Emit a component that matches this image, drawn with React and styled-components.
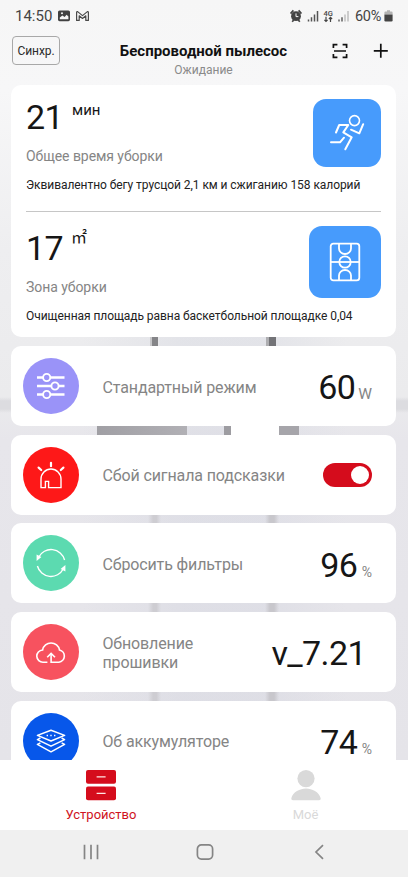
import React from "react";
import styled, { createGlobalStyle } from "styled-components";

const metrics = [
  {
    value: "21",
    unit: "мин",
    label: "Общее время уборки",
    note: "Эквивалентно бегу трусцой 2,1 км и сжиганию 158 калорий",
    size: 68,
    icon: <RunIcon />,
  },
  {
    value: "17",
    unit: "㎡",
    raised: true,
    label: "Зона уборки",
    note: "Очищенная площадь равна баскетбольной площадке 0,04",
    size: 72,
    icon: <CourtIcon />,
  },
];

const rows = [
  { label: "Стандартный режим", color: "#9a93f8", icon: <SlidersIcon />, value: "60", unit: "W", unitSize: 15.5, unitGap: 3 },
  { label: "Сбой сигнала подсказки", color: "#fe1818", icon: <AlarmIcon />, toggle: true },
  { label: "Сбросить фильтры", color: "#5cdab0", icon: <RefreshIcon />, value: "96", unit: "%", unitSize: 14, unitGap: 4.5 },
  { label: "Обновление прошивки", color: "#f7525f", icon: <CloudIcon />, value: "v_7.21", wide: true },
  { label: "Об аккумуляторе", color: "#0757ea", icon: <LayersIcon />, value: "74", unit: "%", unitSize: 14, unitGap: 4.5 },
];

function App() {
  return (
    <Screen>
      <GlobalStyle />
      <StatusBar>
        <StatusGroup>
          <Clock>14:50</Clock>
          <StatusLeftIcons />
        </StatusGroup>
        <StatusGroup>
          <StatusRightIcons />
          <Percent>60%</Percent>
          <BatteryIcon />
        </StatusGroup>
      </StatusBar>

      <Header>
        <SyncButton>Синхр.</SyncButton>
        <Titles>
          <Title>Беспроводной пылесос</Title>
          <Subtitle>Ожидание</Subtitle>
        </Titles>
        <Actions>
          <ScanIcon />
          <PlusIcon />
        </Actions>
      </Header>

      <Content>
        <SummaryCard>
          {metrics.map((m) => (
            <Metric key={m.label}>
              <MetricTop>
                <div>
                  <MetricValue>
                    {m.value}
                    <MetricUnit $raised={m.raised}>{m.unit}</MetricUnit>
                  </MetricValue>
                  <MetricLabel>{m.label}</MetricLabel>
                </div>
                <Tile $size={m.size}>{m.icon}</Tile>
              </MetricTop>
              <Note>{m.note}</Note>
            </Metric>
          ))}
        </SummaryCard>

        {rows.map((row) => (
          <RowCard key={row.label}>
            <Circle $color={row.color}>{row.icon}</Circle>
            <RowLabel $narrow={row.wide}>{row.label}</RowLabel>
            {row.toggle ? (
              <Toggle>
                <Knob />
              </Toggle>
            ) : (
              <RowValue $wide={row.wide}>
                {row.value}
                {row.unit && (
                  <RowUnit $size={row.unitSize} $gap={row.unitGap}>
                    {row.unit}
                  </RowUnit>
                )}
              </RowValue>
            )}
          </RowCard>
        ))}
      </Content>

      <TabBar>
        <Tab $active>
          <DeviceIcon />
          <span>Устройство</span>
        </Tab>
        <Tab>
          <PersonIcon />
          <span>Моё</span>
        </Tab>
      </TabBar>

      <NavBar>
        <svg width="16" height="16" viewBox="0 0 16 16" fill="none" stroke="#858585" strokeWidth="1.7">
          <path d="M1.5 .7v14.6M8 .7v14.6M14.5 .7v14.6" />
        </svg>
        <svg width="18" height="16" viewBox="0 0 18 16" fill="none" stroke="#858585" strokeWidth="1.7">
          <rect x="1.4" y=".9" width="15.2" height="14.2" rx="4" />
        </svg>
        <svg width="16" height="16" viewBox="0 0 16 16" fill="none" stroke="#858585" strokeWidth="1.7">
          <path d="M12 1.2L5 8l7 6.8" />
        </svg>
      </NavBar>
    </Screen>
  );
}

/* icons */

function StatusLeftIcons() {
  return (
    <svg width="32" height="14" viewBox="0 0 32 14">
      <rect x="0" y="1.4" width="12" height="10.8" rx="1.6" fill="#414141" />
      <path d="M1.8 10.2V8.4l2.6-2L6.6 8l2-2.2 1.8 1.8v2.6z" fill="#f5f5f5" />
      <circle cx="4" cy="4.2" r="1" fill="#f5f5f5" />
      <path
        d="M18.6 11.4v-8q0-1 1-.8l4.9 4 4.9-4q1-.2 1 .8v8h-2.6V6.8l-3.3 2.7-3.3-2.7v4.6z"
        fill="none"
        stroke="#4a4a4a"
        strokeWidth="1.2"
        strokeLinejoin="round"
      />
    </svg>
  );
}

function StatusRightIcons() {
  return (
    <svg width="60" height="14" viewBox="0 0 60 14">
      <circle cx="7" cy="7.2" r="4.9" fill="#444" />
      <path d="M1.6 4.6l2.8-3.2M12.4 4.6L9.6 1.4M3.2 12.8L4.700 11M10.800 12.800L9.300 11" stroke="#444" strokeWidth="1.7" />
      <path d="M7 4.4v3.2h2.4" fill="none" stroke="#f7f7f7" strokeWidth="1" />
      <path d="M19.500 12.4v-2M22.500 12.4V8.2M25.500 12.4v-7M28.500 12.4V2" stroke="#555" strokeWidth="1.5" />
      <text x="34.500" y="6.6" fontSize="7.5" fontWeight="500" fill="#444">4G</text>
      <path d="M37 7.8v4.6M35.4 10.800l1.600 1.600 1.600-1.600M41.500 13V8.4M39.900 10l1.600-1.600 1.600 1.600" fill="none" stroke="#444" strokeWidth="1.2" />
      <path d="M50 12.4v-2M53 12.4V8.2" stroke="#555" strokeWidth="1.4" />
      <path d="M56 12.4v-7M59 12.4V2" stroke="#bbb" strokeWidth="1.4" />
    </svg>
  );
}

function BatteryIcon() {
  return (
    <svg width="9" height="14" viewBox="0 0 9 14">
      <path d="M3 1.2h3v1.2h1.4q1.2 0 1.2 1.2v1.8H.4V3.6q0-1.2 1.2-1.2H3z" fill="#b3b3b3" />
      <path d="M.4 5.4h8.2v5.8q0 1.2-1.2 1.2H1.6q-1.2 0-1.2-1.2z" fill="#444" />
    </svg>
  );
}

function ScanIcon() {
  return (
    <svg width="16" height="16" viewBox="0 0 16 16" fill="none" stroke="#111" strokeWidth="1.7">
      <path d="M1.4 5V1.6h4M10.6 1.6h4V5M14.6 11v3.4h-4M5.4 14.4h-4V11M2 8h12" />
    </svg>
  );
}

function PlusIcon() {
  return (
    <svg width="16" height="16" viewBox="0 0 16 16" fill="none" stroke="#111" strokeWidth="1.7">
      <path d="M7.8 .8v14M.8 7.8h14" />
    </svg>
  );
}

function RunIcon() {
  return (
    <svg width="36" height="38" viewBox="0 0 36 38" fill="none" stroke="#fff" strokeWidth="2" strokeLinejoin="round" strokeLinecap="round">
      <circle cx="25.5" cy="6.6" r="5" strokeWidth="1.6" />
      <path d="M7 18.5l3.2-7.5h9.1l-5 7.4 8.4 4.9-6.4 12" />
      <path d="M2 28.3h9l4-4.6" />
      <path d="M34.2 10.2l-3.9 9.1-8.3-3.6" />
    </svg>
  );
}

function CourtIcon() {
  return (
    <svg width="32" height="40" viewBox="0 0 32 40" fill="none" stroke="#fff" strokeWidth="1.8">
      <rect x="1.7" y="1.7" width="28.6" height="36.6" rx="2.6" />
      <path d="M1.7 20h28.6" />
      <circle cx="16" cy="20" r="5.7" />
      <path d="M10 2v4.4a6 5.6 0 0 0 12 0V2M10 38v-4.4a6 5.6 0 0 1 12 0V38" />
    </svg>
  );
}

function SlidersIcon() {
  return (
    <svg width="30" height="28" viewBox="0 0 30 28" fill="none" stroke="#fff" strokeWidth="2.4">
      <path d="M1 5.5h6.2M14 5.5h14.5M1 14h14.5M22.5 14h6M1 22.5h6.2M14 22.5h14.5" />
      <circle cx="10.7" cy="5.5" r="3.6" strokeWidth="1.9" />
      <circle cx="19" cy="14" r="3.6" strokeWidth="1.9" />
      <circle cx="10.7" cy="22.5" r="3.6" strokeWidth="1.9" />
    </svg>
  );
}

function AlarmIcon() {
  return (
    <svg width="30" height="28" viewBox="0 0 30 28" fill="none" stroke="#fff" strokeWidth="1.4">
      <path d="M5 26.6V18a10 10 0 0 1 20 0v8.6H12.600v-6.200H9.400v6.200z" />
      <path d="M15 1.8v3.4M2.6 6.6L5.200 9M27.4 6.6L24.8 9" strokeWidth="2.2" strokeLinecap="round" />
    </svg>
  );
}

function RefreshIcon() {
  return (
    <svg width="30" height="30" viewBox="0 0 30 30" fill="none" stroke="#fff" strokeWidth="1.4">
      <path d="M28.6 12A14 14 0 0 0 2.6 9.2M1.4 18A14 14 0 0 0 27.4 20.8" />
      <path d="M.6 6.4V13l4.800-4zM29.400 23.600V17l-4.800 4z" fill="#fff" stroke="none" />
    </svg>
  );
}

function CloudIcon() {
  return (
    <svg width="30" height="24" viewBox="0 0 30 24" fill="none" stroke="#fff" strokeWidth="1.6">
      <path d="M11.4 22.2H7.2a6 6 0 0 1-.6-12.2 8.6 8.6 0 0 1 16.9 0 6.2 6.2 0 0 1-.6 12.2h-7.8v-8.6" />
      <path d="M11.2 17.2l3.900-3.800 3.900 3.800" />
    </svg>
  );
}

function LayersIcon() {
  return (
    <svg width="30" height="24" viewBox="0 0 30 24" fill="none" stroke="#fff" strokeWidth="1.5" strokeLinejoin="round">
      <path d="M15 1.2l13.6 5.2L15 12 1.4 6.4z" />
      <path d="M4.4 9l-3 1.6L15 17.2l13.6-6.6-3-1.6" />
      <path d="M4.4 13.8l-3 1.6L15 22.8l13.6-7.4-3-1.6" />
      <path d="M10.6 6.5H12M14.3 6.5h1.400M18 6.5h1.400" strokeWidth="1.6" />
    </svg>
  );
}

function DeviceIcon() {
  return (
    <svg width="30" height="31" viewBox="0 0 30 31">
      <rect x="0" y="0" width="30" height="13.8" rx="2" fill="#d50c1c" />
      <rect x="0" y="16.4" width="30" height="13.8" rx="2" fill="#d50c1c" />
      <path d="M10.6 6.9h9M10.6 23.3h9" stroke="#ffe6e6" strokeWidth="1.3" />
    </svg>
  );
}

function PersonIcon() {
  return (
    <svg width="30" height="31" viewBox="0 0 30 31" fill="#d9d9d9">
      <circle cx="15" cy="8.6" r="8.6" />
      <path d="M.3 28.3C2 22 9 18.6 15 18.6s13 3.4 14.7 9.7q.3 1.9-1.7 1.9H2q-2 0-1.7-1.9z" />
    </svg>
  );
}

/* styles */

const GlobalStyle = createGlobalStyle`
  * {
    box-sizing: border-box;
  }

  body {
    margin: 0;
    font-family: Roboto, "Noto Sans CJK SC", sans-serif;
  }

  svg {
    display: block;
    flex-shrink: 0;
  }
`;

/* the gradients draw the blurred room that shows between the cards */
const Screen = styled.div`
  display: flex;
  flex-direction: column;
  height: 877px;
  overflow: hidden;
  background:
    linear-gradient(90deg, #a09fa4, #b1b0b5) 97px 426px / 90px 9px no-repeat,
    linear-gradient(90deg, #9d9ca1 0 7px, #fff 7px 55px, #a6a5aa 55px) 224px 426px / 75px 9px no-repeat,
    linear-gradient(90deg, #c6c6c8 0 2px, #858588 2px 8px, #e8e8ea 8px) 150px 330px / 9px 20px no-repeat,
    linear-gradient(90deg, #aeaeb1 0 3px, #737377 3px) 266px 330px / 10px 20px no-repeat,
    linear-gradient(90deg, transparent, #cecdd2 40% 65%, transparent) 148px 510px / 13px 260px no-repeat,
    linear-gradient(90deg, transparent, #c8c7cc 35% 65%, transparent) 265px 510px / 14px 260px no-repeat,
    linear-gradient(transparent, #dcdce0 25% 75%, transparent) 0 397px / 100% 16px no-repeat,
    linear-gradient(90deg, transparent 20%, rgba(205, 208, 220, 0.3) 45% 65%, transparent 85%) 0 337px / 100% 430px no-repeat,
    linear-gradient(#f6f6f6 0, #f7f7f8 90px, #eeeef0 250px, #ebebed 395px, #e7e6eb 440px, #e5e4e9 760px);
`;

const StatusBar = styled.div`
  display: flex;
  justify-content: space-between;
  align-items: center;
  height: 32px;
  padding: 0 15px;
  color: #444;
`;

const StatusGroup = styled.div`
  display: flex;
  align-items: center;
`;

const Clock = styled.span`
  width: 43px;
  font-size: 15px;
`;

const Percent = styled.span`
  margin: 0 3px 0 6px;
  font-size: 14.5px;
  letter-spacing: -0.3px;
`;

const Header = styled.header`
  display: grid;
  grid-template-columns: 90px 1fr 90px;
  height: 52.5px;
  padding: 0 12px;
`;

const SyncButton = styled.button`
  width: 48px;
  height: 29px;
  margin-top: 4px;
  padding: 0;
  border: 1px solid #a8a8a8;
  border-radius: 4px;
  background: transparent;
  color: #2b2b2b;
  font-family: inherit;
  font-size: 12px;
  letter-spacing: -0.1px;
`;

const Titles = styled.div`
  display: flex;
  flex-direction: column;
  align-items: center;
  padding-right: 1px;
  white-space: nowrap;
`;

const Title = styled.h1`
  margin: 9px 0 0;
  color: #111;
  font-size: 15px;
  font-weight: 700;
  line-height: 20px;
`;

const Subtitle = styled.div`
  color: #8a8a8a;
  font-size: 12px;
  line-height: 18px;
`;

const Actions = styled.div`
  display: flex;
  justify-content: flex-end;
  gap: 25px;
  padding: 11px 7px 0 0;
`;

const Content = styled.main`
  display: flex;
  flex: 1;
  flex-direction: column;
  gap: 8.6px;
  min-height: 0;
  padding: 0 12px 0 11px;
  overflow: hidden;
`;

const SummaryCard = styled.section`
  flex-shrink: 0;
  height: 252.5px;
  margin-bottom: 0.6px;
  padding: 14.5px 15px 0;
  border-radius: 10px;
  background: #fff;
`;

const Metric = styled.div`
  & + & {
    margin-top: 17px;
    padding-top: 14px;
    border-top: 1px solid #c6c6c6;
  }
`;

const MetricTop = styled.div`
  display: flex;
  justify-content: space-between;
  align-items: flex-end;
`;

const MetricValue = styled.div`
  display: flex;
  height: 36px;
  color: #161616;
  font-size: 34px;
  letter-spacing: -0.6px;
  line-height: 36px;
`;

const MetricUnit = styled.span`
  margin-left: ${(p) => (p.$raised ? 8 : 9)}px;
  font-size: ${(p) => (p.$raised ? 16 : 15)}px;
  letter-spacing: 0;
  line-height: ${(p) => (p.$raised ? 15 : 22)}px;
`;

const MetricLabel = styled.div`
  margin: 11px 0 1px;
  color: #858585;
  font-size: 14px;
  letter-spacing: -0.06px;
  line-height: 20px;
`;

const Tile = styled.div`
  display: flex;
  justify-content: center;
  align-items: center;
  width: ${(p) => p.$size}px;
  height: ${(p) => p.$size}px;
  border-radius: 13px;
  background: #479bfc;
`;

const Note = styled.p`
  margin: 9px 0 0;
  color: #222;
  font-size: 12px;
  letter-spacing: -0.06px;
  line-height: 18px;
  white-space: nowrap;
`;

const RowCard = styled.section`
  display: flex;
  flex-shrink: 0;
  align-items: center;
  height: 80px;
  padding: 0 24px 0 11.7px;
  border-radius: 10px;
  background: #fff;
`;

const Circle = styled.div`
  display: flex;
  flex-shrink: 0;
  justify-content: center;
  align-items: center;
  width: 56px;
  height: 56px;
  margin-right: 23.8px;
  border-radius: 50%;
  background: ${(p) => p.$color};
`;

const RowLabel = styled.div`
  width: ${(p) => (p.$narrow ? "130px" : "auto")};
  margin-top: 2px;
  color: #858585;
  font-size: 16px;
  letter-spacing: -0.12px;
  line-height: 19px;
`;

const RowValue = styled.div`
  display: flex;
  align-items: baseline;
  margin: 3px ${(p) => (p.$wide ? "6px" : "0")} 0 auto;
  color: #161616;
  font-size: 34px;
  letter-spacing: -0.6px;
  line-height: 30px;
`;

const RowUnit = styled.span`
  margin-left: ${(p) => p.$gap}px;
  color: #858585;
  font-size: ${(p) => p.$size}px;
  letter-spacing: 0;
  line-height: 1;
`;

const Toggle = styled.div`
  display: flex;
  justify-content: flex-end;
  align-items: center;
  width: 49px;
  height: 24px;
  margin-left: auto;
  padding-right: 3px;
  border-radius: 12px;
  background: #d50c1c;
`;

const Knob = styled.div`
  width: 18px;
  height: 18px;
  border-radius: 50%;
  background: #fff;
`;

const TabBar = styled.nav`
  display: grid;
  grid-template-columns: 1fr 1fr;
  flex-shrink: 0;
  height: 70px;
  background: #fff;
`;

const Tab = styled.div`
  display: flex;
  flex-direction: column;
  align-items: center;
  gap: 4px;
  padding: 10px ${(p) => (p.$active ? 2 : 1)}px 0 0;
  color: ${(p) => (p.$active ? "#cf1322" : "#d9d9d9")};
  font-size: 13px;
  line-height: 20px;
`;

const NavBar = styled.div`
  display: flex;
  flex-shrink: 0;
  justify-content: center;
  align-items: center;
  gap: 97px;
  height: 47.5px;
  padding: 0 0 2px 2px;
  background: #f0f0f0;
`;

export default App;
